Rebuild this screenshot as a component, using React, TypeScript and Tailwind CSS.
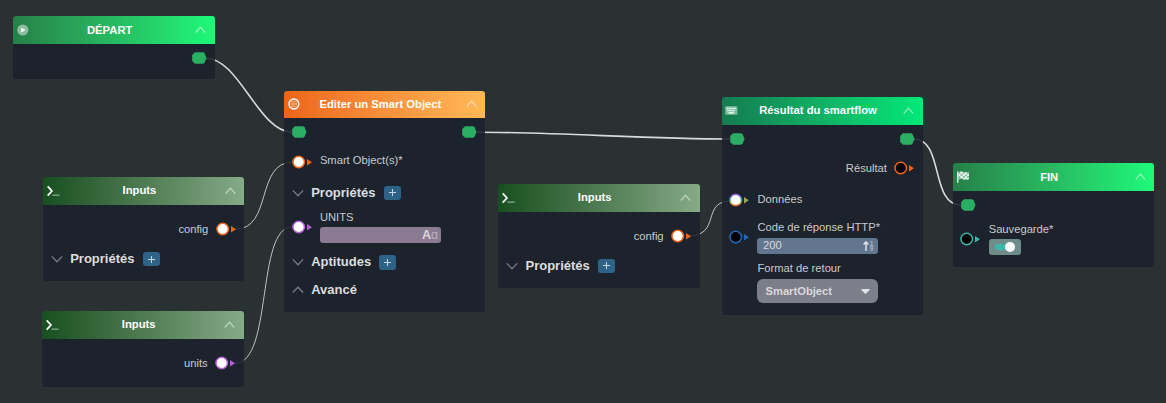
import type { ReactNode } from "react";

type PortKind = "orange" | "violet" | "blue" | "teal" | "rainbow";

const COLORS: Record<PortKind, string> = {
  orange: "#ee6519",
  violet: "#b35fd6",
  blue: "#2469be",
  teal: "#3ab8ab",
  rainbow: "url(#rainbow)",
};

function DataPort({ kind, linked }: { kind: PortKind; linked?: boolean }) {
  return (
    <svg width="21" height="14" viewBox="0 0 21 14" className="block shrink-0">
      <circle cx="6.7" cy="7" r="5.75" fill={linked ? "#fff" : "#000"} stroke={COLORS[kind]} strokeWidth="1.5" />
      <path d="M15 4.1v6.4l5-3.2z" fill={kind === "rainbow" ? "url(#rainbowTip)" : COLORS[kind]} />
    </svg>
  );
}

function FlowPort() {
  return (
    <svg width="15" height="12" viewBox="0 0 15 12" className="block shrink-0">
      <path d="M3 .2h8.2l1.3 1L14.6 6l-2.1 4.8-1.3 1H3L.2 9V3z" fill="#2aae63" />
    </svg>
  );
}

function Chevron({ up, width = 12, color = "#777c85" }: { up?: boolean; width?: number; color?: string }) {
  return (
    <svg width={width} height="8" viewBox="0 0 12 8" className="block shrink-0" preserveAspectRatio="none">
      <path d={up ? "M.8 6.5 6 1.2l5.2 5.3" : "M.8 1.4 6 6.7l5.2-5.3"} fill="none" stroke={color} strokeWidth="1.3" />
    </svg>
  );
}

function PlayIcon() {
  return (
    <svg width="12" height="12" viewBox="0 0 12 12">
      <circle cx="5.8" cy="6" r="5.6" fill="#8dbd9f" />
      <path d="M4.1 3.4v5.2L8.5 6z" fill="#fff" />
    </svg>
  );
}

function PromptIcon() {
  return (
    <svg width="13" height="12" viewBox="0 0 13 12">
      <path d="M.7 1.4 4.9 6 .7 10.6" fill="none" stroke="#fff" strokeWidth="1.8" />
      <path d="M5.5 10.1h7" stroke="#8fae91" strokeWidth="1.4" />
    </svg>
  );
}

function TargetIcon() {
  return (
    <svg width="12" height="12" viewBox="0 0 12 12" fill="none">
      <circle cx="5.9" cy="6" r="5" stroke="#fff" strokeWidth="1.3" />
      <circle cx="5.9" cy="6" r="3" stroke="#f9c3a3" strokeWidth=".8" />
      <circle cx="5.9" cy="6" r="1.3" stroke="#f9c3a3" strokeWidth=".8" />
    </svg>
  );
}

function KeyboardIcon() {
  return (
    <svg width="13" height="9" viewBox="0 0 13 9">
      <rect x=".2" y=".2" width="12.2" height="8.6" rx="1" fill="#80bda0" />
      <path d="M1.5 2.4h9.8M2.3 4.5h8" stroke="#fff" strokeWidth="1.3" strokeDasharray="1.3 .7" />
      <path d="M3.5 6.8h5.6" stroke="#fff" strokeWidth="1.2" />
    </svg>
  );
}

function FlagIcon() {
  return (
    <svg width="13" height="12" viewBox="0 0 13 12" className="ml-[.8px]">
      <path d="M1.3 1.1C4 .2 5.3.5 7 1.1c1.7.7 3 .5 5-.4v7.4c-2 .9-3.4 1-5 .4-1.7-.7-3.3-.7-5.7.2z" fill="#84bd9b" />
      <path d="M3.4.8 5.6.6v2l-2.2.2zM7.8 1.3l2.1.1v2.1l-2.1-.2zM1.5 3.1l2-.4v2.2l-2 .4zM5.6 2.6l2.2.6v2.1l-2.2-.5zM9.9 3.4l2.1-.7v2.1l-2.1.7zM3.5 4.9l2.1-.1v2.1l-2.1.1zM7.8 5.4l2.1.1v2.1l-2.1.2zM5.6 6.9l2.2.6v1.3L5.6 8zM9.9 7.4l2.1-.6V8l-2.1.7z" fill="#fff" />
      <path d="M.8.4v11.4" stroke="#fff" strokeWidth="1.2" />
    </svg>
  );
}

function Node({ place, header, icon, title, children }: { place: string; header: string; icon: ReactNode; title: string; children: ReactNode }) {
  return (
    <section className={`absolute flex w-[201.3px] flex-col overflow-hidden rounded-[3px] bg-[#1b212c]/88 ${place}`}>
      <header className={`flex h-[27.8px] shrink-0 items-center bg-linear-to-r ${header}`}>
        <span className="flex w-5 shrink-0 justify-start pl-[3.5px]">{icon}</span>
        <h2 className="flex-1 pr-[9px] text-center text-[11.25px] font-bold whitespace-nowrap text-white">{title}</h2>
        <span className="mr-[8.5px]"><Chevron up width={11} color="rgba(255,255,255,.5)" /></span>
      </header>
      {children}
    </section>
  );
}

function OutputRow({ label, kind, linked, size }: { label: string; kind: PortKind; linked?: boolean; size: string }) {
  return (
    <div className={`flex shrink-0 items-center justify-end gap-[7.5px] pr-[7.5px] ${size}`}>
      <span className="text-[11.2px] text-[#c9cacc]">{label}</span>
      <DataPort kind={kind} linked={linked} />
    </div>
  );
}

function InputRow({ kind, linked, size, port, children }: { kind: PortKind; linked?: boolean; size: string; port: string; children: ReactNode }) {
  return (
    <div className={`flex shrink-0 items-start gap-[7.4px] pl-[7.5px] ${size}`}>
      <span className={port}><DataPort kind={kind} linked={linked} /></span>
      <div className="flex flex-col items-start text-[11.2px] leading-[13px] whitespace-nowrap text-[#c9cacc]">{children}</div>
    </div>
  );
}

function SectionRow({ title, up, add, size }: { title: string; up?: boolean; add?: boolean; size: string }) {
  return (
    <div className={`flex shrink-0 items-center pl-[8px] ${size}`}>
      <Chevron up={up} />
      <h3 className="ml-[7.2px] text-[13px] leading-4 font-bold text-[#dcddde]">{title}</h3>
      {add && (
        <button className="ml-[8px] flex h-[14.5px] w-[17px] items-center justify-center rounded-[3px] bg-[#2d6387]">
          <svg width="7" height="7" viewBox="0 0 7 7"><path d="M3.5 0v7M0 3.5h7" stroke="#c9d6df" strokeWidth="1" /></svg>
        </button>
      )}
    </div>
  );
}

const GREEN = "from-[#268049] to-[#1df97a]";
const INPUTS = "from-[#174f20] to-[#85aa87]";

export default function App() {
  return (
    <main className="relative h-[403px] w-[1166px] overflow-hidden bg-[#2a3132] font-['Liberation_Sans',sans-serif]">
      <svg className="absolute inset-0" width="1166" height="403" fill="none" stroke="#d9dbdb">
        <defs>
          <linearGradient id="rainbow" x1="0" y1="0" x2="0" y2="1">
            <stop offset="0" stopColor="#9350d8" />
            <stop offset=".3" stopColor="#4b86d0" />
            <stop offset=".55" stopColor="#4aae72" />
            <stop offset=".78" stopColor="#e0b43c" />
            <stop offset="1" stopColor="#e0502c" />
          </linearGradient>
          <linearGradient id="rainbowTip" x1="0" y1="0" x2="1" y2="0">
            <stop offset="0" stopColor="#c79a48" />
            <stop offset="1" stopColor="#3aa678" />
          </linearGradient>
        </defs>
        <g strokeWidth="1.6">
          <path d="M206 58.2C239 58.2 259 132.2 292 132.2" />
          <path d="M477 132.2C560 132.2 646 139 730 139" />
          <path d="M914 139C944 139 930 205 961 205" />
        </g>
        <g strokeWidth="1" stroke="#bfc2c2">
          <path d="M236 229C272 229 256 162.3 292 162.3" />
          <path d="M235 363.3C273 363.3 256 227 292 227" />
          <path d="M688 236C722 236 700 200.8 732 200.8" />
        </g>
      </svg>

      <Node place="left-[13.3px] top-[16.2px] h-[63.3px]" header={GREEN} icon={<PlayIcon />} title="DÉPART">
        <div className="flex h-[29px] items-center justify-end pr-[8px]"><FlowPort /></div>
      </Node>

      <Node place="left-[43px] top-[176.8px] h-[104.2px]" header={INPUTS} icon={<PromptIcon />} title="Inputs">
        <OutputRow label="config" kind="orange" linked size="h-[29px] mt-[10px]" />
        <SectionRow title="Propriétés" add size="h-[31px]" />
      </Node>

      <Node place="left-[42.3px] top-[311px] h-[76.2px]" header={INPUTS} icon={<PromptIcon />} title="Inputs">
        <OutputRow label="units" kind="violet" linked size="h-[29px] mt-[10px]" />
      </Node>

      <Node place="left-[284px] top-[90.5px] h-[221px]" header="from-[#ec6519] to-[#ffb957]" icon={<TargetIcon />} title="Editer un Smart Object">
        <div className="flex h-[28px] shrink-0 items-center justify-between px-[8px]"><FlowPort /><FlowPort /></div>
        <InputRow kind="orange" linked size="h-[30px] pt-[8px]" port="mt-[.5px]">Smart Object(s)*</InputRow>
        <SectionRow title="Propriétés" add size="h-[33px]" />
        <InputRow kind="violet" linked size="h-[38px] pt-[1.5px]" port="mt-[9.7px]">
          <span>UNITS</span>
          <div className="mt-[3px] flex h-4 w-[121px] items-center justify-end rounded-[3px] bg-[#8b7b92] pr-[3px] text-[12.5px] leading-none">
            <span className="font-bold text-[#dad6dd]">A</span><span className="text-[#b8afbd]">ɑ</span>
          </div>
        </InputRow>
        <SectionRow title="Aptitudes" add size="h-[30px]" />
        <SectionRow title="Avancé" up size="h-[25px]" />
      </Node>

      <Node place="left-[498.3px] top-[184px] h-[104.2px]" header={INPUTS} icon={<PromptIcon />} title="Inputs">
        <OutputRow label="config" kind="orange" linked size="h-[29px] mt-[10px]" />
        <SectionRow title="Propriétés" add size="h-[30px]" />
      </Node>

      <Node place="left-[721.6px] top-[97px] h-[218px]" header="from-[#147c51] to-[#00e978]" icon={<KeyboardIcon />} title="Résultat du smartflow">
        <div className="flex h-[28px] shrink-0 items-center justify-between px-[8px]"><FlowPort /><FlowPort /></div>
        <OutputRow label="Résultat" kind="orange" size="h-[31px]" />
        <InputRow kind="rainbow" linked size="h-[30px] pt-[9px]" port="mt-[.5px]">Données</InputRow>
        <InputRow kind="blue" size="h-[88px] pt-[7px]" port="mt-[9.7px]">
          <span>Code de réponse HTTP*</span>
          <div className="mt-[4px] flex h-4 w-[121px] items-center justify-between rounded-[3px] bg-[#63768f] pr-[5px] pl-[5.5px]">
            <span className="text-[#d5d9df]">200</span>
            <span className="flex items-center gap-px">
              <svg width="6" height="10" viewBox="0 0 6 10" fill="none" stroke="#dfe3e8" strokeWidth="1.5"><path d="M3 10V1.2M.6 3.6 3 1l2.4 2.6" /></svg>
              <span className="flex flex-col text-[6.5px] leading-[5px] font-bold text-[#a9b4c1]"><span>1</span><span>9</span></span>
            </span>
          </div>
          <span className="mt-[8px]">Format de retour</span>
          <div className="mt-[4px] flex h-6 w-[121px] items-center justify-between rounded-[6px] bg-[#7c7f89] pt-px pr-[8px] pl-[8px] font-bold text-[#d8d9dc]">
            SmartObject
            <svg width="9" height="5" viewBox="0 0 9 5"><path d="M.8 0h7.4q1 .2.4 1L5.1 4.6q-.6.6-1.2 0L.4 1Q-.2.2.8 0z" fill="#e0e1e3" /></svg>
          </div>
        </InputRow>
      </Node>

      <Node place="left-[952.8px] top-[163.2px] h-[104.2px]" header={GREEN} icon={<FlagIcon />} title="FIN">
        <div className="flex h-[28px] shrink-0 items-center px-[8px]"><FlowPort /></div>
        <InputRow kind="teal" size="h-[40px] pt-[4px]" port="mt-[9.3px]">
          <span>Sauvegarde*</span>
          <div className="mt-[3px] flex h-4 w-[32px] items-center rounded-[3px] bg-[#6e8c89] pl-[6px]">
            <span className="flex h-[6.5px] w-[20px] items-center justify-end rounded-full bg-[#3ab8ab]">
              <span className="size-[10px] shrink-0 rounded-full bg-white" />
            </span>
          </div>
        </InputRow>
      </Node>
    </main>
  );
}
